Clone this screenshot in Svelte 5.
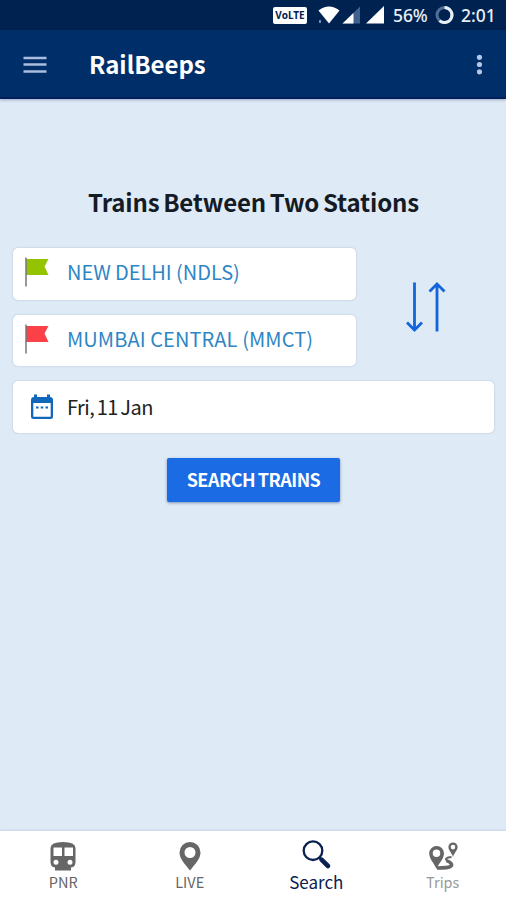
<script>
  let from = $state('NEW DELHI (NDLS)');
  let to = $state('MUMBAI CENTRAL (MMCT)');
  let activeTab = $state('Search');

  const tabs = ['PNR', 'LIVE', 'Search', 'Trips'];

  function swapStations() {
    [from, to] = [to, from];
  }
</script>

{#snippet flag(color)}
  <svg class="flag" width="26" height="32" viewBox="0 0 26 32">
    <path d="M2 3H24.5L20.5 10.500L24.500 19H2Z" fill={color} />
    <path d="M2 1.500V30.500" stroke="#777" stroke-width="1.500" />
  </svg>
{/snippet}

<div class="app">
  <div class="status-bar">
    <span class="volte">VoLTE</span>
    <svg class="signals" width="68" height="20" viewBox="0 0 68 20">
      <path d="M0.500 5.500Q11 -2.500 21.500 5.500L11 18.500Z" fill="#fff" />
      <path d="M2 15V18" stroke="#8fb0d5" stroke-width="1.500" />
      <path d="M42 1.500V18.500H24.500Z" fill="#3f628d" />
      <path d="M35.500 8V18.500H24.500Z" fill="#fff" />
      <path d="M66 1V18.500H48Z" fill="#fff" />
    </svg>
    <span class="battery">56%</span>
    <svg class="ring" width="20" height="20" viewBox="0 0 20 20">
      <circle cx="9.500" cy="10" r="7.500" fill="none" stroke="#526e95" stroke-width="3" />
      <path d="M9.500 2.500A7.500 7.500 0 1 1 4.500 15.600" fill="none" stroke="#e8eef6" stroke-width="3" />
    </svg>
    <span class="clock">2:01</span>
  </div>

  <header>
    <button class="menu-btn" aria-label="Menu">
      <svg width="24" height="20" viewBox="0 0 24 20">
        <path d="M0.500 4H23.500M0.500 10.500H23.500M0.500 17.500H23.500" stroke="#aabfe0" stroke-width="2.500" />
      </svg>
    </button>
    <h1>RailBeeps</h1>
    <button class="more-btn" aria-label="More options">
      <svg width="6" height="22" viewBox="0 0 6 22">
        <g fill="#b5c7e6">
          <circle cx="3.500" cy="4.300" r="2.600" />
          <circle cx="3.500" cy="11.500" r="2.600" />
          <circle cx="3.500" cy="18.800" r="2.600" />
        </g>
      </svg>
    </button>
  </header>

  <main>
    <h2>Trains Between Two Stations</h2>

    <div class="route">
      <div class="stations">
        <button class="field station">
          {@render flag('#94c300')}
          <span class="name from">{from}</span>
        </button>
        <button class="field station">
          {@render flag('#fb4047')}
          <span class="name to">{to}</span>
        </button>
      </div>
      <button class="swap" aria-label="Swap stations" onclick={swapStations}>
        <svg width="42" height="52" viewBox="0 0 42 52">
          <path
            d="M10.500 1.500V49M3 41.500L10.500 49L18 41.500M33 50.500V3M25.500 10.500L33 3L40.500 10.500"
            fill="none"
            stroke="#1365db"
            stroke-width="2.800"
          />
        </svg>
      </button>
    </div>

    <button class="field date">
      <svg width="24" height="26" viewBox="0 0 24 26">
        <path
          fill="#1167b9"
          fill-rule="evenodd"
          d="M4 0.500H7V3H17V0.500H20V3Q23 3 23 6V22.500Q23 25 20.500 25H3.500Q1 25 1 22.500V6Q1 3 4 3ZM3.300 9V22.700H20.700V9Z"
        />
        <path d="M6 13.500H8.500M10.700 13.500H13.200M15.500 13.500H18" stroke="#1167b9" stroke-width="2" />
      </svg>
      <span>Fri, 11 Jan</span>
    </button>

    <button class="search-btn">SEARCH TRAINS</button>
  </main>

  <nav>
    {#each tabs as tab}
      <button class="tab {tab.toLowerCase()}" class:active={activeTab === tab} onclick={() => (activeTab = tab)}>
        <svg width="32" height="32" viewBox="0 0 32 32">
          {#if tab === 'PNR'}
            <path
              fill="currentColor"
              fill-rule="evenodd"
              d="M16 2Q28.500 2 28.500 8V22Q28.500 27 24 27.500V30.500H8V27.500Q3.500 27 3.500 22V8Q3.500 2 16 2ZM6.500 7.500V16H15V7.500ZM17.500 7.500V16H26V7.500ZM9 19.700A2.500 2.500 0 1 0 9 24.700A2.500 2.500 0 1 0 9 19.700ZM23 19.700A2.500 2.500 0 1 0 23 24.700A2.500 2.500 0 1 0 23 19.700Z"
            />
          {:else if tab === 'LIVE'}
            <path
              fill="currentColor"
              fill-rule="evenodd"
              d="M16 2A10.500 10.500 0 0 0 5.500 12.500C5.500 19 11 24 16 30.500C21 24 26.500 19 26.500 12.500A10.500 10.500 0 0 0 16 2ZM16 7A5.500 5.500 0 1 1 16 18A5.500 5.500 0 1 1 16 7Z"
            />
          {:else if tab === 'Search'}
            <circle cx="13" cy="10.700" r="9.300" fill="none" stroke="currentColor" stroke-width="2.300" />
            <path d="M19 17L22 20" stroke="currentColor" stroke-width="2" />
            <path d="M21.500 19.700L28 26" stroke="currentColor" stroke-width="4.600" stroke-linecap="round" />
          {:else}
            <g fill="currentColor" fill-rule="evenodd">
              <path d="M9.500 6A7.300 7.300 0 0 0 2.200 13.300C2.200 19 7 23 9.500 29C12 23 17 19 17 13.300A7.300 7.300 0 0 0 9.500 6ZM9.500 9.500A3.700 3.700 0 1 1 9.500 17A3.700 3.700 0 1 1 9.500 9.500Z" />
              <path d="M26 2.500A4.600 4.600 0 0 0 21.400 7.100C21.400 10.500 25 13 26 17C27 13 30.600 10.500 30.600 7.100A4.600 4.600 0 0 0 26 2.500ZM26 4.800A2.300 2.300 0 1 1 26 9.400A2.300 2.300 0 1 1 26 4.800Z" />
            </g>
            <path
              d="M24.500 17C19 17.500 17.500 19 20 20.500"
              fill="none"
              stroke="currentColor"
              stroke-width="1.800"
            />
            <path
              d="M19.500 20.500C24 22.500 26 24.500 23.500 26.500C21.500 28 16 28 10 28"
              fill="none"
              stroke="currentColor"
              stroke-width="3.500"
            />
          {/if}
        </svg>
        <span>{tab}</span>
      </button>
    {/each}
  </nav>
</div>

<style>
  :global(body) {
    margin: 0;
  }

  .app {
    display: flex;
    flex-direction: column;
    width: 506px;
    height: 900px;
    overflow: hidden;
    background: #deeaf6;
    font-family: 'Noto Sans CJK SC', 'Noto Sans', sans-serif;
  }

  button {
    margin: 0;
    padding: 0;
    border: none;
    background: none;
    font-family: inherit;
    cursor: pointer;
  }

  svg {
    display: block;
    flex: none;
  }

  .status-bar {
    display: flex;
    align-items: center;
    flex: none;
    box-sizing: border-box;
    height: 30px;
    padding-left: 273px;
    background: #002251;
    color: #e8eef6;
    font-family: 'Noto Sans', sans-serif;
    font-size: 17.5px;
    font-weight: 500;
    line-height: 30px;
    white-space: nowrap;
  }

  .volte {
    flex: none;
    width: 34px;
    height: 17px;
    border-radius: 2px;
    background: #fff;
    color: #002251;
    font-size: 10px;
    font-weight: 700;
    line-height: 17px;
    text-align: center;
  }

  .signals {
    margin-left: 11px;
  }

  .battery {
    width: 41px;
    margin-left: 7px;
    letter-spacing: -0.1px;
  }

  .ring {
    margin-left: 1px;
  }

  .clock {
    margin-left: 6px;
  }

  header {
    display: flex;
    align-items: center;
    flex: none;
    box-sizing: border-box;
    height: 69px;
    padding: 0 24px 0 23px;
    border-bottom: 2px solid #001d5c;
    background: #002e68;
    box-shadow: 0 1px 3px rgba(0, 20, 70, 0.3);
  }

  h1 {
    flex: 1;
    margin: 1px 0 0 42px;
    color: #fff;
    font-size: 24px;
    font-weight: 700;
    line-height: 36px;
  }

  main {
    display: flex;
    flex: 1;
    flex-direction: column;
    padding: 85px 12px 0 13px;
  }

  h2 {
    margin: 0 0 28px;
    color: #151b24;
    font-size: 24px;
    font-weight: 700;
    letter-spacing: -0.15px;
    word-spacing: -1.5px;
    line-height: 36px;
    text-align: center;
    white-space: nowrap;
  }

  .route {
    display: flex;
  }

  .stations {
    display: flex;
    flex-direction: column;
    gap: 15px;
    width: 343px;
  }

  .field {
    display: flex;
    align-items: center;
    box-sizing: border-box;
    height: 51.5px;
    border-radius: 5px;
    background: #fff;
    box-shadow: 0 0 2px rgba(80, 100, 130, 0.35);
    white-space: nowrap;
  }

  .station {
    padding: 0 0 3px 11px;
  }

  .name {
    margin-left: 17px;
    color: #2e86c5;
    font-size: 20px;
    line-height: 28px;
  }

  .from {
    letter-spacing: -0.05px;
  }

  .to {
    letter-spacing: 0.1px;
  }

  .swap {
    display: flex;
    flex: 1;
    align-items: center;
    padding-left: 48px;
  }

  .date {
    margin-top: 15px;
    padding-left: 17px;
    color: #222;
    font-size: 20px;
  }

  .date span {
    margin-left: 13px;
    letter-spacing: -0.5px;
    word-spacing: -1.7px;
    line-height: 28px;
  }

  .search-btn {
    align-self: center;
    width: 173px;
    height: 44px;
    margin-top: 25px;
    padding-bottom: 2px;
    border-radius: 2px;
    background: #1a6be4;
    box-shadow: 0 1px 3px rgba(30, 60, 120, 0.5);
    color: #fff;
    font-size: 18px;
    font-weight: 700;
    letter-spacing: -0.5px;
    word-spacing: -1px;
    white-space: nowrap;
  }

  nav {
    display: grid;
    grid-template-columns: repeat(4, 1fr);
    flex: none;
    height: 69px;
    background: #fff;
    box-shadow: 0 -1px 2px rgba(90, 90, 130, 0.15);
  }

  .tab {
    display: flex;
    flex-direction: column;
    align-items: center;
    padding-top: 9px;
    color: #666;
    font-size: 14.5px;
    line-height: 20px;
  }

  .tab.trips span {
    color: #999;
  }

  .tab.active {
    color: #0a2050;
    font-size: 17px;
  }
</style>
